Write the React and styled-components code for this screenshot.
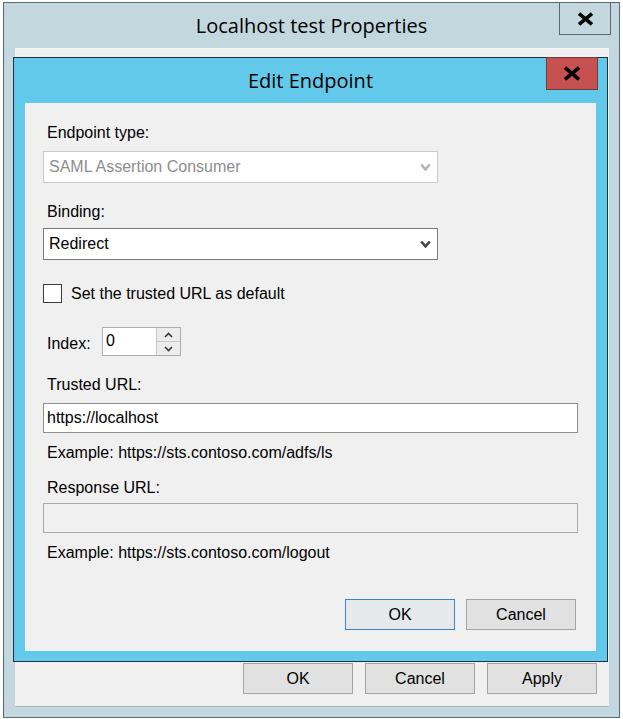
import React from 'react';
import styled, { createGlobalStyle } from 'styled-components';

const Global = createGlobalStyle`
  html, body { margin: 0; padding: 0; background: #ffffff; }
  body {
    width: 623px; height: 719px; overflow: hidden;
    font-family: "Liberation Sans", Arial, sans-serif;
    font-size: 16px; color: #000;
  }
  * { box-sizing: border-box; }
`;

const Desktop = styled.div`
  position: relative;
  width: 623px;
  height: 719px;
  padding: 2px 0 0 3px;
`;

const Window = styled.div`
  width: ${p => p.$w}px;
  height: ${p => p.$h}px;
  border: 1px solid ${p => p.$border};
  background: ${p => p.$frame};
  display: flex;
  flex-direction: column;
`;

const Dialog = styled(Window)`
  position: absolute;
  left: 13px;
  top: 57px;
`;

const TitleBar = styled.div`
  height: 45px;
  flex: none;
  display: grid;
  grid-template-columns: 1fr auto 1fr;
  align-items: start;
`;

const Title = styled.div`
  grid-column: 2;
  margin-top: 10px;
  font-family: "Open Sans", "Noto Sans", sans-serif;
  font-size: 20px;
  line-height: 26px;
  color: #000;
  white-space: nowrap;
`;

const CloseBtn = styled.div`
  grid-column: 3;
  justify-self: end;
  width: 52px;
  height: 33px;
  margin-top: -1px;
  margin-right: ${p => p.$right}px;
  border: 1px solid ${p => (p.$danger ? '#6b3a36' : '#5d6670')};
  background: ${p => (p.$danger ? '#c75050' : 'transparent')};
  display: flex;
  align-items: center;
  justify-content: center;
`;

const OuterClient = styled.div`
  flex: 1;
  margin: 0 10px 10px 11px;
  background: #f0f0f0;
  border-top: 1px solid #f7f7f7;
  border-bottom: 1px solid #a9b5ba;
  display: flex;
  align-items: flex-end;
  justify-content: flex-end;
  padding: 0 12px 12px 0;
`;

const DialogClient = styled.div`
  flex: 1;
  margin: 0 11px 10px 11px;
  background: #f0f0f0;
  padding: 21px 18px 0 18px;
  display: flex;
  flex-direction: column;
`;

const Label = styled.div`
  margin-top: ${p => p.$mt || 0}px;
  padding-left: 4px;
  height: 18px;
  line-height: 18px;
  color: ${p => (p.$muted ? '#222' : '#000')};
  white-space: nowrap;
`;

const Select = styled.div`
  margin-top: ${p => p.$mt}px;
  width: 395px;
  height: 32px;
  border: 1px solid ${p => (p.$disabled ? '#cacaca' : '#7a7a7a')};
  background: #fff;
  display: flex;
  align-items: center;
  justify-content: space-between;
  padding: 0 6px 0 5px;
  color: ${p => (p.$disabled ? '#8d8d8d' : '#000')};
  line-height: 18px;
`;

const TextBox = styled.div`
  margin-top: ${p => p.$mt}px;
  height: 30px;
  border: 1px solid ${p => (p.$disabled ? '#a8a8a8' : '#8f8f8f')};
  background: ${p => (p.$disabled ? '#f0f0f0' : '#fff')};
  padding: 0 3px;
  display: flex;
  align-items: center;
  line-height: 18px;
`;

const CheckRow = styled.label`
  margin-top: ${p => p.$mt}px;
  height: 19px;
  display: flex;
  align-items: center;
  gap: 9px;
  line-height: 18px;
`;

const CheckBox = styled.span`
  width: 19px;
  height: 19px;
  border: 1px solid #3a3a3a;
  background: #fff;
  flex: none;
`;

const IndexRow = styled.div`
  margin-top: ${p => p.$mt}px;
  display: flex;
  align-items: flex-start;
  height: 29px;
`;

const IndexLabel = styled(Label)`
  width: 59px;
  margin-top: 8px;
`;

const Spin = styled.div`
  width: 79px;
  height: 29px;
  border: 1px solid #abadb3;
  display: flex;
  background: #fff;
`;

const SpinValue = styled.div`
  flex: 1;
  padding: 4px 0 0 3px;
  line-height: 18px;
`;

const SpinButtons = styled.div`
  width: 24px;
  display: flex;
  flex-direction: column;
  border-left: 1px solid #c9c9c9;
  background: #ececec;
`;

const SpinHalf = styled.div`
  flex: 1;
  display: flex;
  align-items: center;
  justify-content: center;
  border-top: ${p => (p.$bottom ? '1px solid #c9c9c9' : 'none')};
`;

const ButtonRow = styled.div`
  margin-top: ${p => p.$mt || 0}px;
  display: flex;
  justify-content: flex-end;
  gap: ${p => p.$gap}px;
  padding-right: ${p => p.$pr || 0}px;
`;

const Button = styled.div`
  width: ${p => p.$w}px;
  height: 31px;
  border: 1px solid ${p => (p.$default ? '#3c83c4' : '#a3a3a3')};
  background: ${p => (p.$default ? '#e5e9ec' : '#e1e1e1')};
  display: flex;
  align-items: center;
  justify-content: center;
  line-height: 18px;
  color: #000;
`;

const XIcon = ({ w, h }) => (
  <svg width={w} height={h} viewBox={`0 0 ${w} ${h}`}>
    <path
      d={`M2 1.6 L${w - 2} ${h - 1.6} M${w - 2} 1.6 L2 ${h - 1.6}`}
      stroke="#000"
      strokeWidth="3.6"
      fill="none"
    />
  </svg>
);

const Chevron = ({ color = '#444', w = 11, h = 8, sw = 2.6 }) => (
  <svg width={w} height={h} viewBox={`0 0 ${w} ${h}`}>
    <path
      d={`M1.2 1.5 L${w / 2} ${h - 1.6} L${w - 1.2} 1.5`}
      stroke={color}
      strokeWidth={sw}
      fill="none"
    />
  </svg>
);

const SmallArrow = ({ up }) => (
  <svg width="9" height="6" viewBox="0 0 9 6">
    <path
      d={up ? 'M1 5 L4.5 1.4 L8 5' : 'M1 1 L4.5 4.6 L8 1'}
      stroke="#333"
      strokeWidth="1.5"
      fill="none"
    />
  </svg>
);

export default function App() {
  return (
    <>
      <Global />
      <Desktop>
        <Window $w={617} $h={716} $border="#5d6670" $frame="#c3d7de">
          <TitleBar>
            <Title>Localhost test Properties</Title>
            <CloseBtn $right={8}>
              <XIcon w={17} h={14} />
            </CloseBtn>
          </TitleBar>
          <OuterClient>
            <ButtonRow $gap={12}>
              <Button $w={110}>OK</Button>
              <Button $w={110}>Cancel</Button>
              <Button $w={110}>Apply</Button>
            </ButtonRow>
          </OuterClient>
        </Window>

        <Dialog $w={595} $h={605} $border="#22323c" $frame="#63c9ea">
          <TitleBar>
            <Title>Edit Endpoint</Title>
            <CloseBtn $right={9} $danger>
              <XIcon w={18} h={15} />
            </CloseBtn>
          </TitleBar>
          <DialogClient>
            <Label>Endpoint type:</Label>
            <Select $mt={9} $disabled>
              <span>SAML Assertion Consumer</span>
              <Chevron color="#b5b5b5" />
            </Select>

            <Label $mt={20}>Binding:</Label>
            <Select $mt={7}>
              <span>Redirect</span>
              <Chevron color="#454545" />
            </Select>

            <CheckRow $mt={24}>
              <CheckBox />
              <span>Set the trusted URL as default</span>
            </CheckRow>

            <IndexRow $mt={24}>
              <IndexLabel>Index:</IndexLabel>
              <Spin>
                <SpinValue>0</SpinValue>
                <SpinButtons>
                  <SpinHalf>
                    <SmallArrow up />
                  </SpinHalf>
                  <SpinHalf $bottom>
                    <SmallArrow />
                  </SpinHalf>
                </SpinButtons>
              </Spin>
            </IndexRow>

            <Label $mt={20}>Trusted URL:</Label>
            <TextBox $mt={9}>https://localhost</TextBox>
            <Label $mt={11}>Example: https://sts.contoso.com/adfs/ls</Label>

            <Label $mt={17}>Response URL:</Label>
            <TextBox $mt={6} $disabled />
            <Label $mt={11}>Example: https://sts.contoso.com/logout</Label>

            <ButtonRow $mt={37} $gap={11} $pr={2}>
              <Button $w={110} $default>OK</Button>
              <Button $w={110}>Cancel</Button>
            </ButtonRow>
          </DialogClient>
        </Dialog>
      </Desktop>
    </>
  );
}
